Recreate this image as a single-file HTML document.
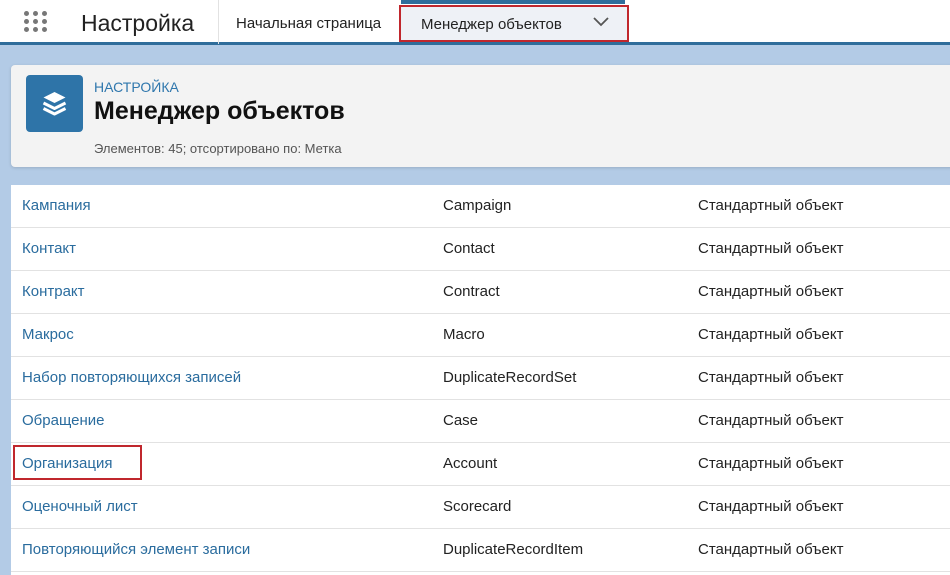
<!DOCTYPE html>
<html><head><meta charset="utf-8"><style>
*{margin:0;padding:0;box-sizing:border-box}
body{width:950px;height:569px;overflow:hidden;background:#b3cbe6;font-family:"Liberation Sans",sans-serif;position:relative}
.hdr{position:absolute;left:0;top:0;width:950px;height:45px;background:#fff;border-bottom:3px solid #2f6d9b}
.dots{position:absolute;left:24px;top:11px;width:24px;height:22px}
.dots i{position:absolute;width:5px;height:5px;border-radius:50%;background:#777}
.app{position:absolute;left:81px;top:10px;font-size:23px;color:#222}
.sep{position:absolute;left:218px;top:0;width:1px;height:44px;background:#e2e2e2}
.home{position:absolute;left:236px;top:15px;font-size:15px;color:#222}
.tabbar{position:absolute;left:401px;top:0;width:224px;height:4px;background:#2f6d9b}
.tab{position:absolute;left:399px;top:5px;width:230px;height:37px;background:#eef1f6;border:2px solid #c0272d;font-size:15px;color:#222;padding:9px 0 0 20px}
.chev{position:absolute;left:192px;top:10px}
.card{position:absolute;left:11px;top:65px;width:945px;height:102px;background:#f3f3f3;border-radius:4px;box-shadow:0 1px 3px rgba(0,0,0,.15)}
.ico{position:absolute;left:15px;top:10px;width:57px;height:57px;background:#2e74a8;border-radius:4px}
.t1{position:absolute;left:83px;top:14px;font-size:14px;color:#2f77ad}
.t2{position:absolute;left:83px;top:32px;font-size:25px;font-weight:bold;color:#111}
.t3{position:absolute;left:83px;top:76px;font-size:13px;color:#555}
.tbl{position:absolute;left:11px;top:185px;width:945px;height:390px;background:#fff}
.row{position:absolute;left:0;width:945px;height:43px;border-bottom:1px solid #e2e2e2;font-size:15px}
.row span{position:absolute;top:12px}
.a{left:11px;color:#2a6c9e}.b{left:432px;color:#222}.c{left:687px;color:#222}
.red{position:absolute;left:13px;top:445px;width:129px;height:35px;border:2px solid #c0272d}
</style></head><body>
<div class="hdr">
<div class="dots"><i style="left:0;top:0"></i><i style="left:9px;top:0"></i><i style="left:18px;top:0"></i><i style="left:0;top:8px"></i><i style="left:9px;top:8px"></i><i style="left:18px;top:8px"></i><i style="left:0;top:16px"></i><i style="left:9px;top:16px"></i><i style="left:18px;top:16px"></i></div>
<div class="app">Настройка</div><div class="sep"></div>
<div class="home">Начальная страница</div>
</div>
<div class="tabbar"></div>
<div class="tab">Менеджер объектов<svg class="chev" width="16" height="10" viewBox="0 0 16 10"><path d="M1 1l7 7 7-7" fill="none" stroke="#555" stroke-width="1.8"/></svg></div>
<div class="card">
<div class="ico"><svg width="57" height="57" viewBox="0 0 57 57"><path d="M28.5 17l11 5.5-11 5.5-11-5.5z" fill="#fff"/><path d="M17.5 28l11 5.5 11-5.5M17.5 33.5l11 5.5 11-5.5" fill="none" stroke="#fff" stroke-width="3" stroke-linejoin="round"/></svg></div>
<div class="t1">НАСТРОЙКА</div><div class="t2">Менеджер объектов</div>
<div class="t3">Элементов: 45; отсортировано по: Метка</div>
</div>
<div class="tbl">
<div class="row" style="top:0"><span class="a">Кампания</span><span class="b">Campaign</span><span class="c">Стандартный объект</span></div>
<div class="row" style="top:43px"><span class="a">Контакт</span><span class="b">Contact</span><span class="c">Стандартный объект</span></div>
<div class="row" style="top:86px"><span class="a">Контракт</span><span class="b">Contract</span><span class="c">Стандартный объект</span></div>
<div class="row" style="top:129px"><span class="a">Макрос</span><span class="b">Macro</span><span class="c">Стандартный объект</span></div>
<div class="row" style="top:172px"><span class="a">Набор повторяющихся записей</span><span class="b">DuplicateRecordSet</span><span class="c">Стандартный объект</span></div>
<div class="row" style="top:215px"><span class="a">Обращение</span><span class="b">Case</span><span class="c">Стандартный объект</span></div>
<div class="row" style="top:258px"><span class="a">Организация</span><span class="b">Account</span><span class="c">Стандартный объект</span></div>
<div class="row" style="top:301px"><span class="a">Оценочный лист</span><span class="b">Scorecard</span><span class="c">Стандартный объект</span></div>
<div class="row" style="top:344px"><span class="a">Повторяющийся элемент записи</span><span class="b">DuplicateRecordItem</span><span class="c">Стандартный объект</span></div>
</div>
<div class="red"></div>
</body></html>
